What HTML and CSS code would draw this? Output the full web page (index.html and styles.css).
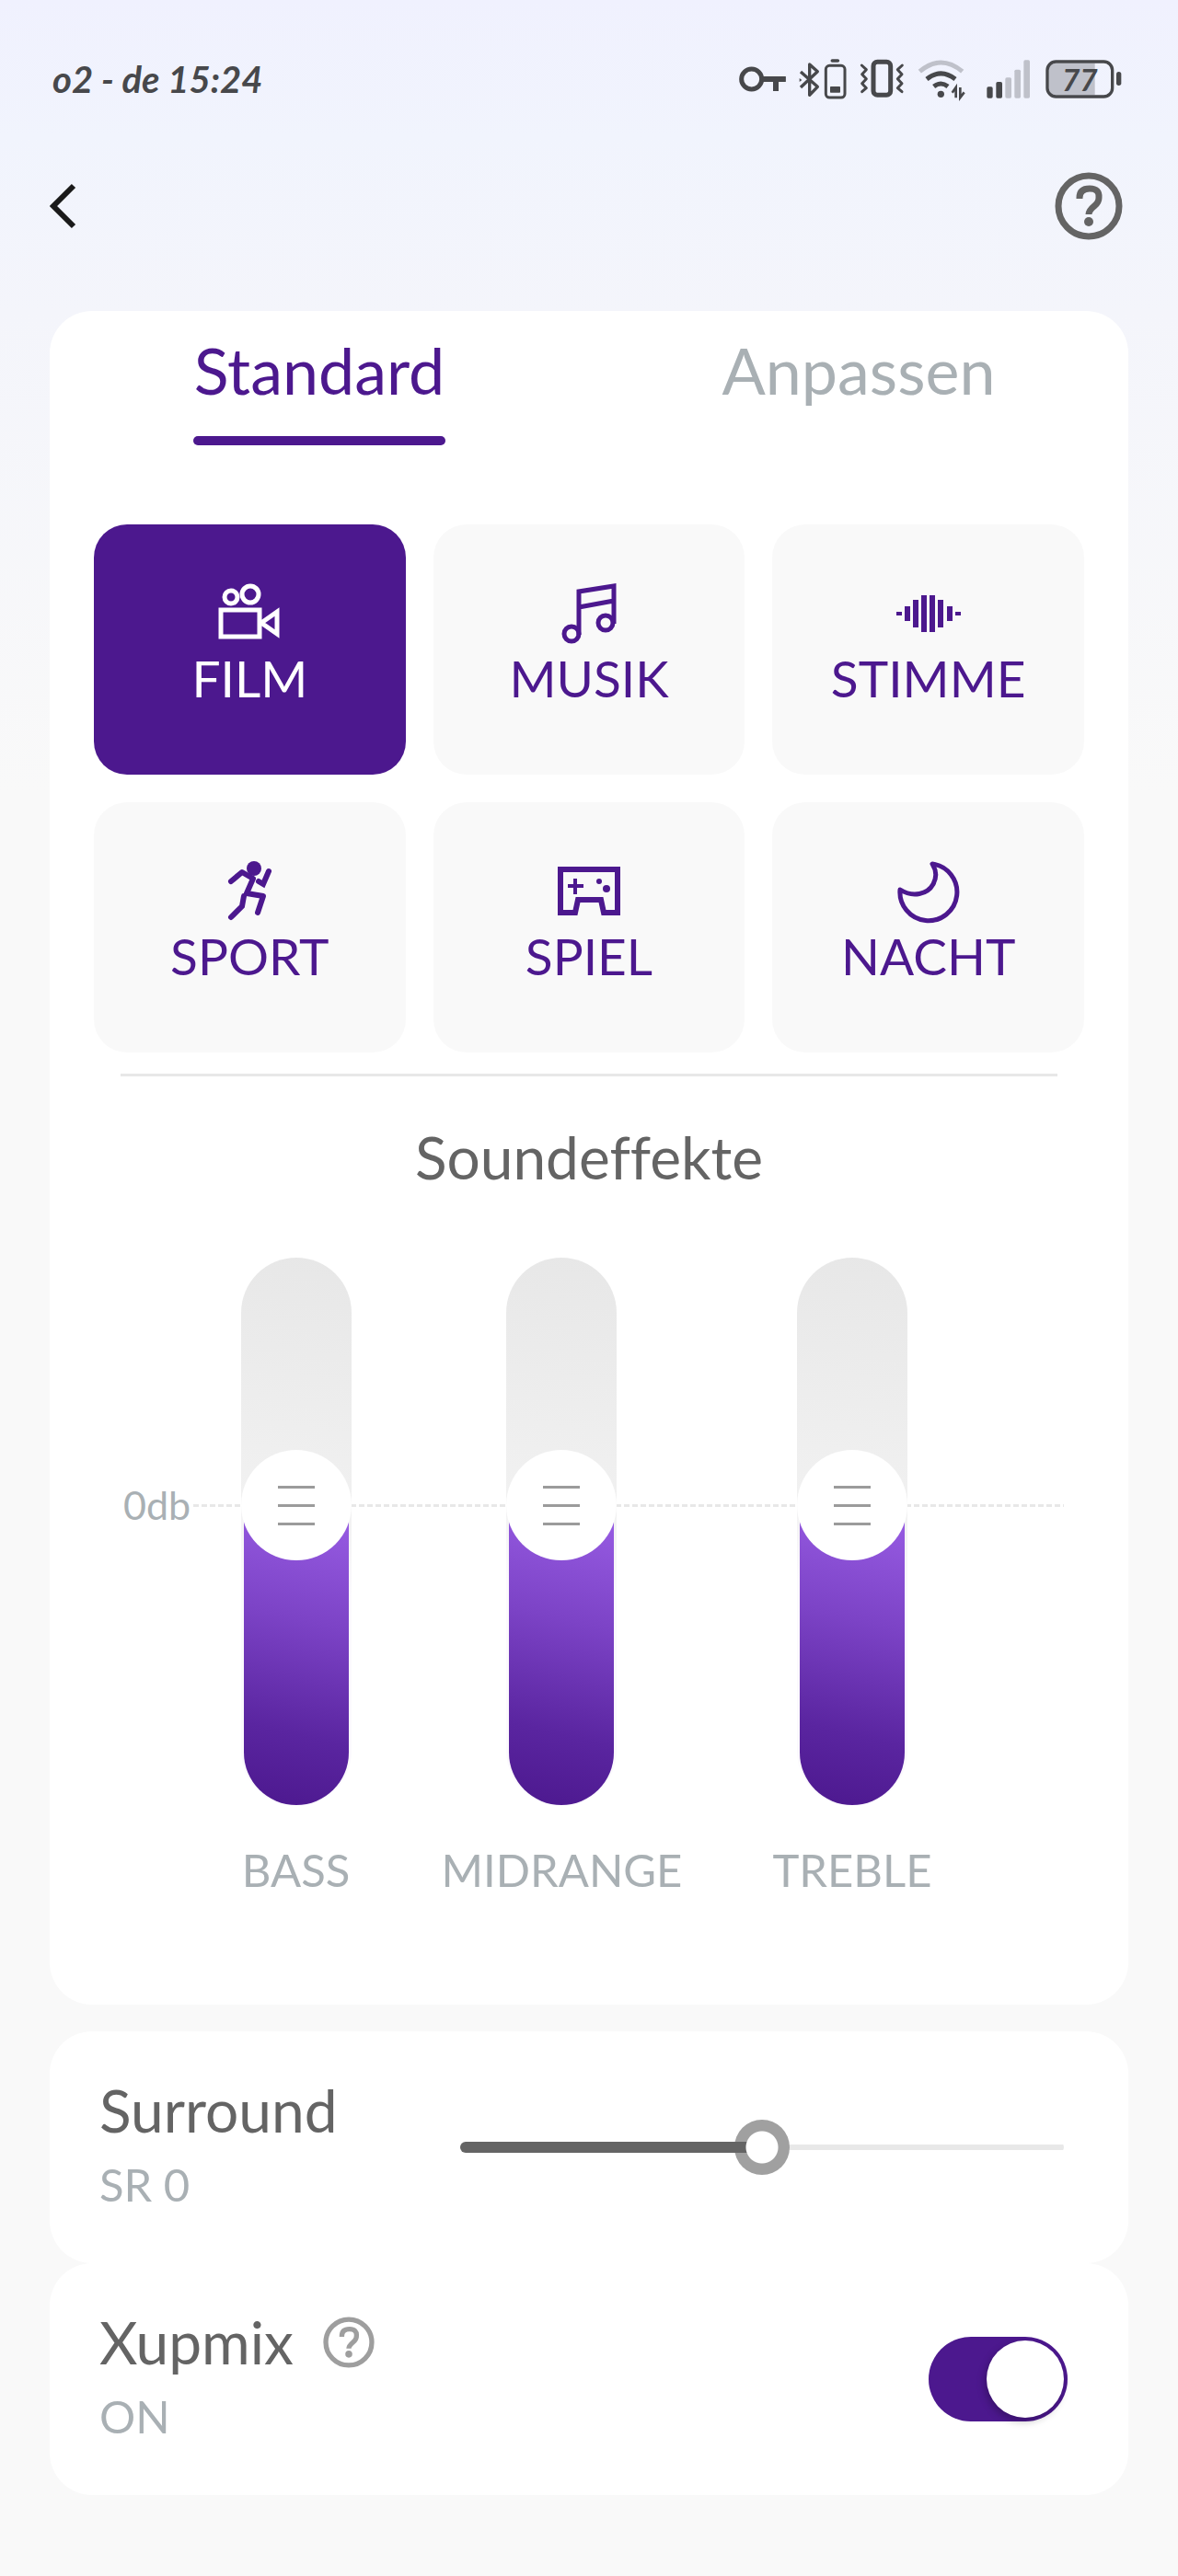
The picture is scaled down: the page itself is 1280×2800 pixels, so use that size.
FILE: index.html
```
<!DOCTYPE html>
<html lang="de">
<head>
    <meta charset="UTF-8">
    <meta name="viewport" content="width=device-width, initial-scale=1.0">
    <title>Soundeffekte</title>
    <link rel="stylesheet" href="styles.css">
</head>
<body>
    <div class="page">
        <div class="status">
            <span class="status-text">o2 - de 15:24</span>
            <div class="status-icons">
                <!-- vpn -->
                <svg class="key" viewBox="69 60 153 156" width="51" height="52" fill="none" stroke="#47484b">
                    <circle cx="110" cy="138" r="33" stroke-width="15"/>
                    <path d="M146 138h75" stroke-width="18"/>
                    <path d="M189 138v39M212 130v16" stroke-width="18"/>
                </svg>
                <!-- bluetooth + headset battery -->
                <svg class="bt" viewBox="262 60 156 156" width="52" height="52" fill="none" stroke="#47484b">
                    <path d="M268 114l55 49-26 27V90l26 23-55 52" stroke-width="10" stroke-linejoin="round"/>
                    <path d="M264 135l8 6-8 6z" fill="#47484b" stroke="none"/>
                    <rect x="350" y="94" width="62" height="104" rx="12" stroke-width="9"/>
                    <rect x="364" y="162" width="33" height="20" rx="2" fill="#47484b" stroke="none"/>
                    <path d="M371 78h18" stroke-width="11" stroke-linecap="round"/>
                </svg>
                <!-- vibrate -->
                <svg class="vib" viewBox="458 60 147 156" width="49" height="52" fill="none" stroke="#47484b">
                    <rect x="503" y="82" width="56" height="108" rx="13" stroke-width="15"/>
                    <path d="M465 93l15 14-14 15 14 15-14 15 14 15-14 12M597 93l-15 14 14 15-14 15 14 15-14 15 14 12" stroke-width="9" stroke-linecap="round" stroke-linejoin="round"/>
                </svg>
                <!-- wifi -->
                <svg class="wifi" viewBox="645 60 159 156" width="53" height="52" fill="none" stroke="#47484b" stroke-width="15">
                    <path d="M652 113q69-58 139 0" stroke="#bfc1ca"/>
                    <path d="M675 138q46-37 93 0M698 162q23-18 46 0"/>
                    <circle cx="721" cy="187" r="11" fill="#47484b" stroke="none"/>
                    <path d="M770 199v-34l-12 17M784 165v33l13-17" stroke-width="8"/>
                </svg>
                <!-- signal -->
                <svg class="signal" viewBox="878 60 144 156" width="48" height="52" fill="#bfc1ca">
                    <rect x="879" y="163" width="19" height="37" rx="5" fill="#47484b"/>
                    <rect x="909" y="147" width="20" height="53" rx="5" fill="#47484b"/>
                    <rect x="939" y="133" width="20" height="67" rx="5"/>
                    <rect x="969" y="107" width="20" height="93" rx="5"/>
                    <rect x="999" y="76" width="20" height="124" rx="5"/>
                </svg>
                <!-- battery -->
                <svg viewBox="1068 60 249 156" width="83" height="52">
                    <path d="M1100 86h129v104h-129q-22 0-22-22v-60q0-22 22-22z" fill="#bfc1ca"/>
                    <rect x="1074" y="81" width="212" height="114" rx="28" fill="none" stroke="#47484b" stroke-width="10"/>
                    <rect x="1299" y="114" width="16" height="45" rx="8" fill="#47484b"/>
                    <text x="1180" y="176" class="battery-text">77</text>
                </svg>
            </div>
        </div>

        <div class="nav">
            <button class="icon-btn" aria-label="Zurück">
                <svg viewBox="0 0 30 50" width="30" height="50" fill="none" stroke="#1a1a1a" stroke-width="6">
                    <path d="M26 3L4 25l22 22"/>
                </svg>
            </button>
            <button class="icon-btn" aria-label="Hilfe">
                <svg viewBox="0 0 74 74" width="74" height="74" fill="none" stroke="#646464" stroke-width="7">
                    <circle cx="37" cy="37" r="33"/>
                    <path d="M27 29v-1q0-10 11-10t10 10q0 5-5 9-6 5-6 9"/>
                    <circle cx="37" cy="54" r="5" fill="#646464" stroke="none"/>
                </svg>
            </button>
        </div>

        <div class="card">
            <div class="tabs">
                <button class="tab active">Standard</button>
                <button class="tab">Anpassen</button>
            </div>

            <div class="modes">
                <button class="mode active">
                    <svg viewBox="0 0 70 70" width="70" height="70" fill="none" stroke="currentColor" stroke-width="5">
                        <circle cx="15" cy="17" r="7"/>
                        <circle cx="36" cy="14" r="9"/>
                        <path d="M4 31h42v29H4zM48 45l17-12v24z"/>
                    </svg>
                    <span>FILM</span>
                </button>
                <button class="mode">
                    <svg viewBox="0 0 70 70" width="70" height="70" fill="none" stroke="currentColor" stroke-width="5">
                        <circle cx="16" cy="57" r="8"/>
                        <circle cx="53" cy="45" r="8"/>
                        <path d="M24 58V11l38-6v41M24 28l38-7"/>
                    </svg>
                    <span>MUSIK</span>
                </button>
                <button class="mode">
                    <svg viewBox="0 0 70 70" width="70" height="70" stroke="currentColor" stroke-width="6">
                        <path d="M3 33v4M12 27v16M21 20v30M30 15v40M39 15v40M48 20v30M58 27v16M67 33v4"/>
                    </svg>
                    <span>STIMME</span>
                </button>
                <button class="mode">
                    <svg viewBox="0 0 70 70" width="70" height="70" fill="none" stroke="currentColor" stroke-width="6">
                        <circle cx="40" cy="10" r="8" fill="currentColor" stroke="none"/>
                        <path d="M15 24l12-10 12 7-7 16 18 3-6 18" stroke-linejoin="round" stroke-linecap="round"/>
                        <path d="M29 40l-2 11-12 12M56 13l-6 14-5-3" stroke-linecap="round"/>
                    </svg>
                    <span>SPORT</span>
                </button>
                <button class="mode">
                    <svg viewBox="0 0 70 70" width="70" height="70" fill="none" stroke="currentColor" stroke-width="6">
                        <path d="M4 11h62v47H51l-3-14H23l-3 14H4z"/>
                        <path d="M12 29h17M20 21v17" stroke-width="4"/>
                        <circle cx="46" cy="24" r="3" fill="currentColor" stroke="none"/>
                        <circle cx="54" cy="32" r="4" fill="currentColor" stroke="none"/>
                    </svg>
                    <span>SPIEL</span>
                </button>
                <button class="mode">
                    <svg viewBox="0 0 70 70" width="70" height="70" fill="none" stroke="currentColor" stroke-width="5" stroke-linejoin="round">
                        <path d="M39 5a31 31 0 1 1-35 28C18 42 34 38 40 27q6-11-1-22z"/>
                    </svg>
                    <span>NACHT</span>
                </button>
            </div>

            <hr class="line">

            <h2 class="title">Soundeffekte</h2>

            <div class="eq">
                <div class="zero"><span>0db</span><i></i></div>
                <div class="bands">
                    <div class="band">
                        <div class="slider">
                            <div class="track"><div class="fill" style="height: 56%"></div></div>
                            <input type="range" id="bass" min="0" max="100" value="56">
                        </div>
                        <label for="bass">BASS</label>
                    </div>
                    <div class="band">
                        <div class="slider">
                            <div class="track"><div class="fill" style="height: 56%"></div></div>
                            <input type="range" id="midrange" min="0" max="100" value="56">
                        </div>
                        <label for="midrange">MIDRANGE</label>
                    </div>
                    <div class="band">
                        <div class="slider">
                            <div class="track"><div class="fill" style="height: 56%"></div></div>
                            <input type="range" id="treble" min="0" max="100" value="56">
                        </div>
                        <label for="treble">TREBLE</label>
                    </div>
                </div>
            </div>
        </div>

        <div class="card row surround">
            <div class="info">
                <label class="name" for="surround">Surround</label>
                <span class="value">SR 0</span>
            </div>
            <input class="level" type="range" id="surround" min="-10" max="10" value="0">
        </div>

        <div class="card row xupmix">
            <div class="info">
                <div class="name-line">
                    <label class="name" for="xupmix">Xupmix</label>
                    <button class="icon-btn" aria-label="Info zu Xupmix">
                        <svg viewBox="0 0 74 74" width="56" height="56" fill="none" stroke="#9e9e9e" stroke-width="7">
                            <circle cx="37" cy="37" r="33"/>
                            <path d="M27 29v-1q0-10 11-10t10 10q0 5-5 9-6 5-6 9"/>
                            <circle cx="37" cy="54" r="5" fill="#9e9e9e" stroke="none"/>
                        </svg>
                    </button>
                </div>
                <span class="value">ON</span>
            </div>
            <input class="switch" type="checkbox" id="xupmix" checked>
        </div>
    </div>
</body>
</html>
```

FILE: styles.css
```
* {
    padding: 0;
    margin: 0;
    box-sizing: border-box;
}

body {
    min-height: 100vh;
    font-family: Lato, "Open Sans", sans-serif;
    font-variant-ligatures: none;
    color: #646464;
    background: #f9f9f9 linear-gradient(#f0f1fe, #f1f4fd 150px, #f4f5fb 340px, #f9f9f9 860px) no-repeat;
}

button {
    font: inherit;
    border: none;
    background: none;
    cursor: pointer;
}

svg {
    display: block;
}

.page {
    padding: 60px 54px 87px;
}

/* status bar */
.status {
    height: 52px;
    padding: 0 7px 0 3px;
    display: flex;
    justify-content: space-between;
    align-items: center;
}

.status-text {
    font-size: 40px;
    line-height: 52px;
    font-weight: 700;
    font-style: italic;
    color: #47484b;
}

.status-icons {
    display: flex;
    gap: 14px;
}

.signal {
    margin: 0 2px 0 8px;
}

.battery-text {
    font-size: 100px;
    font-weight: 700;
    font-style: italic;
    text-anchor: middle;
    fill: #47484b;
}

/* top navigation */
.nav {
    height: 74px;
    margin: 75px 0 77px;
    padding-right: 6px;
    display: flex;
    justify-content: space-between;
    align-items: center;
}

.card {
    background-color: #fff;
    border-radius: 46px;
}

.tabs {
    display: flex;
    padding-top: 24px;
}

.tab {
    flex: 1;
    display: flex;
    flex-direction: column;
    align-items: center;
    font-size: 70px;
    line-height: 80px;
    color: #a9b0b4;
}

.tab::after {
    content: "";
    width: 274px;
    height: 10px;
    margin-top: 32px;
    border-radius: 5px;
}

.tab.active {
    color: #4c188e;
}

.tab.active::after {
    background-color: #4c188e;
}

.modes {
    display: grid;
    grid-template-columns: repeat(3, 1fr);
    gap: 30px;
    padding: 86px 48px 23px;
}

.mode {
    display: flex;
    flex-direction: column;
    align-items: center;
    gap: 5px;
    padding: 62px 0 75px;
    border-radius: 36px;
    font-size: 55px;
    line-height: 60px;
    color: #4c188e;
    background-color: #f9f9f9;
}

.mode.active {
    color: #fff;
    background-color: #4c188e;
}

.line {
    height: 3px;
    margin: 0 77px;
    border: none;
    background-color: #e8e8e8;
}

.title {
    margin: 52px 0 73px;
    font-size: 64px;
    line-height: 72px;
    font-weight: 400;
    text-align: center;
}

/* equalizer */
.eq {
    display: grid;
    padding: 0 70px 117px 80px;
}

.zero,
.bands {
    grid-area: 1 / 1;
}

.zero {
    height: 50px;
    margin-top: 244px;
    display: flex;
    align-items: center;
    font-size: 43px;
    line-height: 50px;
    color: #a9b0b4;
}

.zero i {
    flex: 1;
    height: 3px;
    background: repeating-linear-gradient(90deg, transparent 0 3px, #e8e8e8 3px 9px);
}

.bands {
    display: flex;
    justify-content: center;
    gap: 98px;
    padding-right: 16px;
}

.band {
    display: flex;
    flex-direction: column;
    align-items: center;
    gap: 39px;
    font-size: 49px;
    line-height: 60px;
    color: #a9b0b4;
}

.slider {
    display: grid;
    width: 120px;
    height: 596px;
}

.track,
.slider input {
    grid-area: 1 / 1;
}

.track {
    display: flex;
    align-items: flex-end;
    padding: 0 3px 1px;
    border-radius: 60px;
    background: linear-gradient(190deg, #e7e7e7, #f1f1f1 45%, #fbf9fd 60%);
}

.fill {
    width: 100%;
    border-radius: 0 0 57px 57px;
    background: linear-gradient(193deg, #9c60e8, #7c43c6 40%, #5a25a0 75%, #4c188e);
}

.slider input {
    appearance: none;
    writing-mode: vertical-lr;
    direction: rtl;
    width: 120px;
    height: 596px;
    background: none;
}

.slider input::-webkit-slider-thumb {
    appearance: none;
    width: 120px;
    height: 120px;
    border-radius: 50%;
    background:
        linear-gradient(#9b9b9b, #9b9b9b) center 39px / 40px 3px no-repeat,
        linear-gradient(#9b9b9b, #9b9b9b) center 59px / 40px 3px no-repeat,
        linear-gradient(#9b9b9b, #9b9b9b) center 79px / 40px 3px no-repeat,
        #fff;
}

/* surround + xupmix */
.row {
    display: flex;
    align-items: center;
    justify-content: space-between;
}

.surround {
    margin-top: 29px;
    padding: 0 70px 0 54px;
}

.xupmix {
    padding: 0 66px 0 54px;
}

.info {
    display: flex;
    flex-direction: column;
    gap: 14px;
    width: 392px;
    padding: 50px 0 56px;
}

.name {
    font-size: 64px;
    line-height: 72px;
}

.name-line {
    display: flex;
    align-items: center;
    gap: 32px;
}

.value {
    font-size: 49px;
    line-height: 60px;
    color: #a9b0b4;
}

.level {
    appearance: none;
    flex: 1;
    height: 60px;
    background: none;
}

.level::-webkit-slider-runnable-track {
    height: 12px;
    border-radius: 6px;
    background:
        linear-gradient(90deg, #646464 50%, transparent 50%),
        linear-gradient(#e8e8e8, #e8e8e8) center / 100% 6px no-repeat;
}

.level::-webkit-slider-thumb {
    appearance: none;
    width: 60px;
    height: 60px;
    margin-top: -24px;
    border-radius: 50%;
    background:
        radial-gradient(circle, #fff 17px, transparent 18px),
        linear-gradient(#646464, #646464) left center / 30px 12px no-repeat,
        #a0a0a0;
}

.switch {
    appearance: none;
    display: flex;
    width: 151px;
    height: 92px;
    padding: 4px;
    border-radius: 46px;
    background-color: #c4c4c4;
}

.switch::before {
    content: "";
    width: 84px;
    height: 84px;
    border-radius: 50%;
    background-color: #fff;
    box-shadow: -2px 4px 8px rgba(0, 0, 0, 0.25);
}

.switch:checked {
    justify-content: flex-end;
    background-color: #4c188e;
}
```
